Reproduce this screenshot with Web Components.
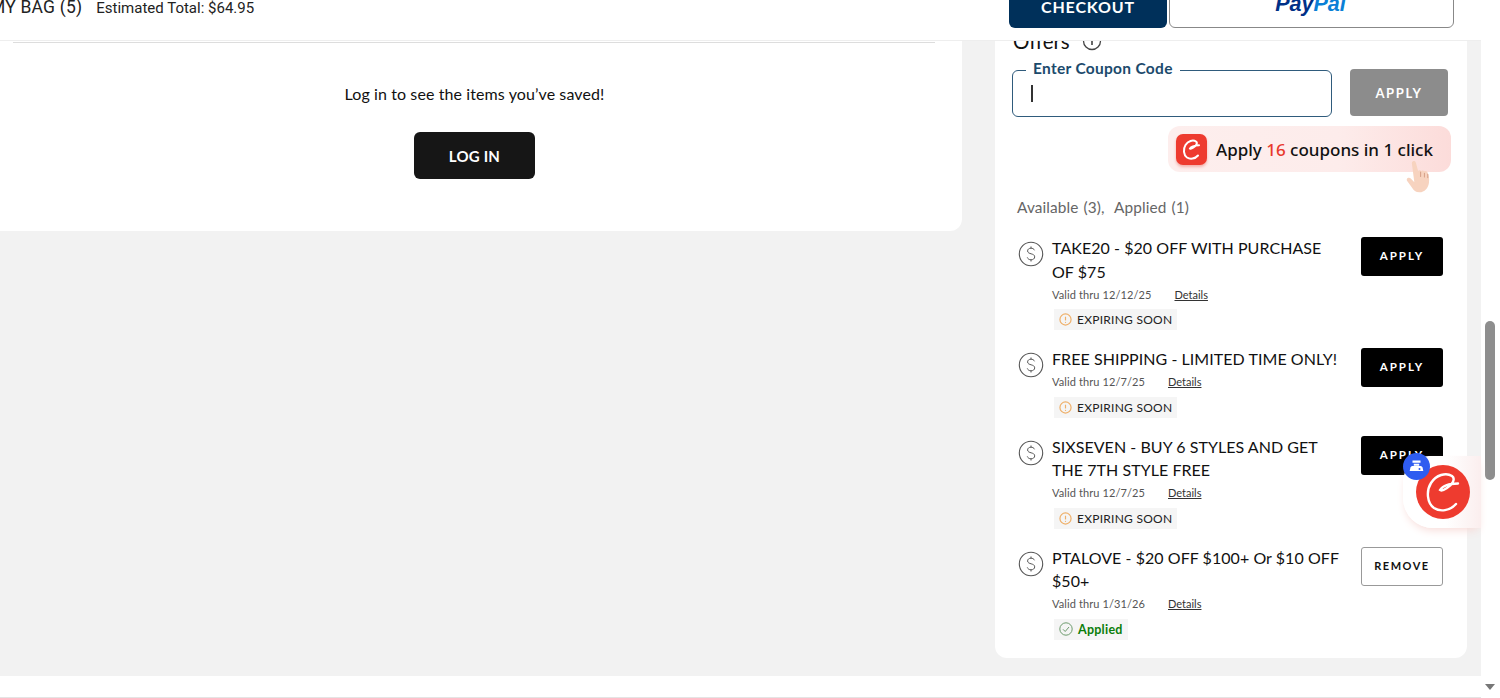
<!DOCTYPE html>
<html lang="en"><head><meta charset="utf-8"><title>Bag</title>
<style>
html,body{margin:0;padding:0;height:100%;overflow:hidden;background:#fff}
body{font-family:Lato,"Noto Sans",sans-serif;color:#000}
</style></head>
<body>
<bag-page>
  <bag-header slot="header" count="5" total="$64.95"></bag-header>
  <saved-panel slot="left"></saved-panel>
  <offers-panel slot="right">
    <coupon-row code="TAKE20 - $20 OFF WITH PURCHASE OF $75" valid="12/12/25" status="expiring" action="APPLY"></coupon-row>
    <coupon-row code="FREE SHIPPING - LIMITED TIME ONLY!" valid="12/7/25" status="expiring" action="APPLY"></coupon-row>
    <coupon-row code="SIXSEVEN - BUY 6 STYLES AND GET THE 7TH STYLE FREE" valid="12/7/25" status="expiring" action="APPLY"></coupon-row>
    <coupon-row code="PTALOVE - $20 OFF $100+ Or $10 OFF $50+" valid="1/31/26" status="applied" action="REMOVE"></coupon-row>
  </offers-panel>
  <page-scrollbar slot="scroll"></page-scrollbar>
  <helper-fab slot="fab"></helper-fab>
</bag-page>
<script>
const SWIRL='M40 39C34 46 24 47 18 43C11 38 10 26 15 18C20 10 30 7 36 11C40 14 36 20 31 23C28 25 25 26 24 25C27 20 33 19 42 18.500';
function def(name,html,init){
  customElements.define(name,class extends HTMLElement{
    connectedCallback(){
      if(this.shadowRoot)return;
      const r=this.attachShadow({mode:'open'});
      r.innerHTML=typeof html==='function'?html(this):html;
      if(init)init(r,this);
    }
  });
}
def('bag-page',`<style>
:host{display:flex;width:1500px;height:698px;overflow:hidden;background:#fff;position:relative}
.col{width:1481px;display:flex;flex-direction:column;flex:none}
.main{height:635px;flex:none;background:#f2f2f2;display:flex;gap:33px;overflow:hidden}
.l{width:962px;flex:none}.r{width:472px;flex:none}
.foot{flex:1;background:#fff;border-bottom:1px solid #e4e4e4}
.s{flex:1}
</style>
<div class="col"><slot name="header"></slot>
<div class="main"><div class="l"><slot name="left"></slot></div><div class="r"><slot name="right"></slot></div></div>
<div class="foot"></div></div>
<div class="s"><slot name="scroll"></slot></div>
<slot name="fab"></slot>`);

def('bag-header',h=>`<style>
:host{display:flex;height:41px;box-sizing:border-box;background:#fff;border-bottom:1px solid #eee;overflow:hidden;flex:none}
.a{display:flex;align-items:baseline;gap:14px;margin:-3px 0 0 -10px;width:1019px;flex:none;height:24px;font-family:Roboto,sans-serif}
.bag{font-size:17.5px;color:#222;letter-spacing:.2px}
.tot{font-size:15px;color:#222}
.btns{display:flex;gap:2px;margin-top:-14px;height:42px}
.co{width:158px;background:#00305a;color:#fff;border-radius:6px;display:flex;align-items:center;justify-content:center;font:700 16px Lato,sans-serif;letter-spacing:.85px}
.co span{position:relative;top:-1px}
.pp{width:285px;box-sizing:border-box;border:1px solid #888;border-radius:6px;display:flex;align-items:center;justify-content:center;font:italic 700 21.5px "Liberation Sans",sans-serif;color:#003087}
.pp i{color:#0a7fd6}.pp span{position:relative;top:-3px;left:-1px}
</style>
<div class="a"><span class="bag">MY BAG (${h.getAttribute('count')})</span><span class="tot">Estimated Total: ${h.getAttribute('total')}</span></div>
<div class="btns"><div class="co"><span>CHECKOUT</span></div><div class="pp"><span>Pay<i>Pal</i></span></div></div>`);

def('saved-panel',`<style>
:host{display:block;height:190px;background:#fff;border-radius:0 0 12px 0;text-align:center;box-sizing:border-box;padding-right:13px}
hr{margin:0 14px 0 13px;border:0;border-top:1px solid #ddd;height:0;position:relative;top:1px}
p{margin:0;padding-top:41px;font-size:16px;line-height:22px;color:#111;letter-spacing:.1px}
button{display:block;margin:27px auto 0;width:121px;height:47px;background:#161616;color:#fff;border:0;border-radius:6px;font:700 15px Lato,sans-serif;letter-spacing:.2px}
</style><hr><p>Log in to see the items you’ve saved!</p><button>LOG IN</button>`);

def('offers-panel',`<style>
:host{display:block;height:629px;background:#fff;border-radius:0 0 12px 12px;box-sizing:border-box;padding-left:17px;position:relative}
.t{display:flex;align-items:center;gap:12px;height:24px;margin:-12px 0 0 1px;font-size:20.5px;color:#111}
.t svg{display:block}
.f{display:flex;gap:18px;margin-top:17px}
.in{width:320px;height:47px;box-sizing:border-box;border:1.5px solid #2f5b7c;border-radius:6px;position:relative}
.in b{position:absolute;left:13px;top:-12px;background:#fff;padding:0 7px;font:700 15.5px/18px Lato,sans-serif;color:#1b4a6c;letter-spacing:.3px;white-space:nowrap}
.in i{position:absolute;left:18px;top:14px;width:1.5px;height:17px;background:#333}
.ap{width:98px;height:47px;margin-top:-1px;background:#8c8c8c;color:#fff;border:0;border-radius:4px;font:700 13px Lato,sans-serif;letter-spacing:1.6px}
.hint{margin:9px 0 0 156px;width:283px;height:46px;border-radius:12px;background:linear-gradient(90deg,#fdeeed 0%,#fdeceb 60%,#fcdcda 100%);display:flex;align-items:center;gap:9px;padding-left:8px;box-sizing:border-box;font:500 17px "Noto Sans",sans-serif;color:#111;position:relative;white-space:nowrap}
.lg{width:31px;height:31px;border-radius:7px;background:#ee3b2f;flex:none;display:block;box-shadow:0 2px 3px #f3b0aa}
.hint em{font-style:normal;color:#e8392c}
.hand{position:absolute;left:236px;top:34px}
.av{margin:24px 0 0 5px;font-size:15.4px;line-height:22px;color:#666;word-spacing:1px;letter-spacing:.1px}
.list{display:flex;flex-direction:column;gap:17px;margin:18px 0 0 6px}
</style>
<div class="t"><span>Offers</span><svg width="20" height="20" viewBox="0 0 20 20"><circle cx="10" cy="10" r="8.500" fill="none" stroke="#444" stroke-width="1.300"/><path d="M10 9v5" stroke="#333" stroke-width="1.500"/><circle cx="10" cy="6.300" r="1" fill="#333"/></svg></div>
<div class="f"><div class="in"><b>Enter Coupon Code</b><i></i></div><button class="ap">APPLY</button></div>
<div class="hint"><svg class="lg" viewBox="0 0 31 31"><path d="${SWIRL}" fill="none" stroke="#fff" stroke-width="4" stroke-linecap="round" transform="translate(2 2) scale(.5)"/></svg><span>Apply <em>16</em> coupons in 1 click</span>
<svg class="hand" width="31" height="33" viewBox="1 0 25 30"><path d="M7.500 1.200c1.200-.6 2.300 0 2.700 1.300l2 7.300c1-.8 2.200-.8 3 .1.900-.6 2-.5 2.800.3 1-.4 2.100-.1 2.700.9 1.300 2.400 1.900 6 1.400 9.600-.7 5-3.900 8.700-8.600 8.700-3.500 0-5.300-1.900-6.900-4.500L2.300 19.200c-.7-1.100-.4-2.200.5-2.800 1-.6 2.200-.2 3 .7l3 3.200L6.600 3.400c-.2-1 .1-1.800.9-2.200z" fill="#f7d3bf"/><path d="M14.500 11v4M18 12v3.500M21 13v3" stroke="#d9a48c" stroke-width="1" stroke-linecap="round"/></svg></div>
<div class="av">Available (3),&nbsp; Applied (1)</div>
<div class="list"><slot></slot></div>`);

def('coupon-row',h=>{
 const ap=h.getAttribute('status')==='applied';
 const rem=h.getAttribute('action')==='REMOVE';
 return `<style>
:host{display:grid;grid-template-columns:34px 309px 82px;align-items:start}
.ic{display:block;margin-top:5px}
.tt{font-size:16px;line-height:23.500px;color:#111;padding-right:18px;letter-spacing:.05px}
.m{display:flex;height:26px;box-sizing:border-box;padding-bottom:4px;align-items:center;gap:23px;font-size:11px;color:#555;letter-spacing:.1px}
.m u{color:#333;letter-spacing:0}
.bd{display:inline-flex;align-items:center;height:21px;margin-left:2px;padding:0 ${ap?5:5}px 0 5px;background:#f5f5f5;gap:5px;font-size:${ap?12.5:12}px;letter-spacing:.25px;color:${ap?'#0a7d0a':'#222'};${ap?'font-weight:700;':''}}
.bd svg{display:block}
button{height:39px;width:82px;margin-top:1px;border-radius:3px;font:700 ${rem?11:11.5}px Lato,sans-serif;letter-spacing:${rem?1.5:2}px;background:${rem?'#fff':'#000'};color:${rem?'#111':'#fff'};border:${rem?'1px solid #999':'0'};padding:0 0 2px}
</style>
<svg class="ic" width="26" height="26" viewBox="0 0 26 26"><circle cx="13" cy="13" r="11.700" fill="none" stroke="#555" stroke-width="1.100"/><path d="M16.500 9.300c-.5-1.400-1.900-2.100-3.500-2.100-1.900 0-3.400 1-3.400 2.700 0 3.800 7.100 2 7.100 6 0 1.800-1.600 2.900-3.700 2.900-1.800 0-3.200-.9-3.700-2.400M13 5.500v1.700M13 18.800v1.700" fill="none" stroke="#555" stroke-width="1"/></svg>
<div><div class="tt">${h.getAttribute('code')}</div>
<div class="m"><span>Valid thru ${h.getAttribute('valid')}</span><u>Details</u></div>
<div class="bd">${ap?'<svg width="14" height="14" viewBox="0 0 14 14"><circle cx="7" cy="7" r="6.200" fill="none" stroke="#6d9b6d" stroke-width="1"/><path d="M4 7.300l2.200 2.200L10 5" fill="none" stroke="#6d9b6d" stroke-width="1"/></svg>':'<svg width="13" height="13" viewBox="0 0 14 14"><circle cx="7" cy="7" r="6" fill="none" stroke="#efb06a" stroke-width="1.300"/><path d="M7 4v4" stroke="#efb06a" stroke-width="1.300"/><circle cx="7" cy="10" r=".7" fill="#efb06a"/></svg>'}<span>${ap?'Applied':'EXPIRING SOON'}</span></div></div>
<button>${h.getAttribute('action')}</button>`});

def('page-scrollbar',`<style>
:host{display:flex;flex-direction:column;height:698px;box-sizing:border-box;position:relative}
.th{margin:321px 0 0 4px;width:10px;height:159px;background:#8e8e8e;border-radius:5px}
.ar{margin:204px 0 0 4px;width:0;height:0;border-left:5px solid transparent;border-right:5px solid transparent;border-top:6px solid #777}
</style><div class="th"></div><div class="ar"></div>`);

def('helper-fab',`<style>
:host{display:block;position:absolute;left:1403px;top:456px;width:78px;height:72px}
.p{position:absolute;inset:0;background:linear-gradient(90deg,#fff 55%,#fbeeee 100%);border-radius:26px 0 0 30px;box-shadow:0 5px 10px -3px #f7d9d6}
.c{position:absolute;left:13px;top:9px;width:54px;height:54px;display:block}
.b{position:absolute;left:0;top:-3px;width:27px;height:27px;display:block}
</style><div class="p"></div>
<svg class="c" viewBox="0 0 54 54"><circle cx="27" cy="27" r="27" fill="#ee3b2f"/><path d="${SWIRL}" fill="none" stroke="#fff" stroke-width="2.400" stroke-linecap="round"/></svg>
<svg class="b" viewBox="0 0 27 27"><circle cx="13.500" cy="13.500" r="13.500" fill="#2f5cf0"/><path d="M9.500 7.500h8v2.200h-8zM10.800 10.800h5.400v2h-5.400zM7.500 14.300c.6-1 1.500-1.300 2.500-1.300h7c1 0 1.900.300 2.500 1.300l.8 3.700h-13.600z" fill="#fff"/><circle cx="16.500" cy="16" r="1" fill="#2f5cf0"/></svg>`);
</script>
</body></html>
